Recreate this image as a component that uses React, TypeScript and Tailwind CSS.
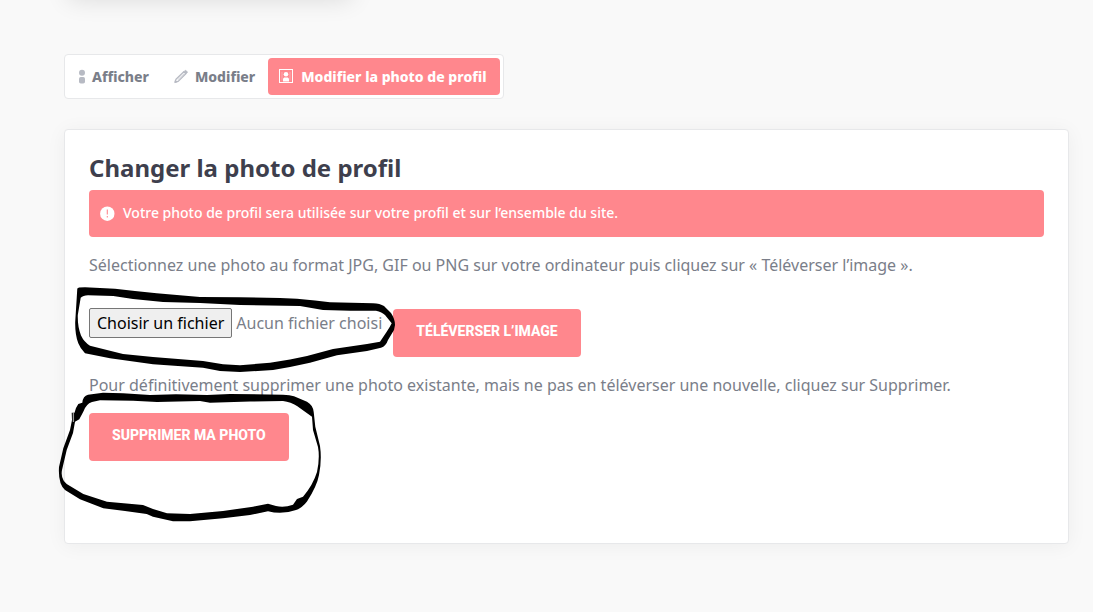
import type { ReactNode } from 'react';

function UserIcon() {
  return (
    <svg className="h-4 w-2" viewBox="0 0 8 16" fill="currentColor" aria-hidden="true">
      <circle cx="4" cy="3.8" r="3" />
      <rect x="1" y="8" width="6" height="6.6" rx="1.8" />
    </svg>
  );
}

function PencilIcon() {
  return (
    <svg className="h-4 w-4" viewBox="0 0 16 16" fill="none" stroke="currentColor" strokeLinejoin="round" aria-hidden="true">
      <path d="M2.2 13 3 10.2 10.8 2.8l2 2L5.2 12.4Z" strokeWidth="1.3" />
      <path d="M4.6 10.9 11 4.8" strokeWidth="0.7" />
      <path d="m11 2.4 2.3 2.3 1.1-1.2c.5-.6-1.8-2.7-2.4-2.1Z" fill="currentColor" strokeWidth="0.6" />
      <path d="m1.8 13.6.5-2 1.5 1.5Z" fill="currentColor" strokeWidth="0.8" />
    </svg>
  );
}

function PortraitIcon() {
  return (
    <svg className="h-4 w-4" viewBox="0 0 16 16" fill="currentColor" aria-hidden="true">
      <rect x="1.5" y="0.5" width="13" height="13" fill="none" stroke="currentColor" />
      <path d="M3.5 3h1v8.5h-1zM11.5 3h1v8.5h-1z" opacity="0.3" />
      <circle cx="8" cy="5.2" r="2.3" />
      <path d="M5 12.5v-2.2C5 9 6 8.4 6.8 8.4h2.4c.8 0 1.8.6 1.8 1.9v2.2Z" />
    </svg>
  );
}

function AlertIcon() {
  return (
    <svg className="mt-1 h-4 w-4 shrink-0" viewBox="0 0 16 16" aria-hidden="true">
      <circle cx="8.3" cy="8.7" r="7.2" fill="currentColor" />
      <path d="M8.3 4.6v5M8.3 11v1.5" stroke="#ff878d" strokeWidth="1.1" />
    </svg>
  );
}

interface TabProps {
  icon: ReactNode;
  label: string;
  active?: boolean;
  className: string;
}

function Tab({ icon, label, active = false, className }: TabProps) {
  return (
    <a
      href="#"
      aria-current={active ? 'page' : undefined}
      className={`flex h-[37px] items-center rounded text-sm font-extrabold whitespace-nowrap ${
        active ? 'bg-[#ff878d] text-white' : 'text-[#7a7e89]'
      } ${className}`}
    >
      <span className={active ? '' : 'text-[#b7bac3]'}>{icon}</span>
      {label}
    </a>
  );
}

function ActionButton({ children }: { children: ReactNode }) {
  return (
    <button
      type="button"
      className="h-12 rounded bg-[#ff878d] px-[23px] pb-1 font-[Roboto,sans-serif] text-sm font-extrabold whitespace-nowrap text-white uppercase hover:bg-[#f9747b]"
    >
      {children}
    </button>
  );
}

// Freehand marker loops around the two actions
function MarkerLoops() {
  return (
    <svg
      className="pointer-events-none absolute top-0 left-0 h-[540px] w-[400px]"
      viewBox="0 0 400 540"
      fill="#000"
      fillRule="evenodd"
      aria-hidden="true"
    >
      <path
        d="M77.3 288.5 79 287.5 85 287.3 115 288.7 135 291 156.7 293.3 200 297 240 297.3 280 298 297 298.7 315 300.5 330 302.3 373 303.3 Q380 303.6 384 306 L391 313 Q395 319 395 325 L394 330 388 340 Q386 346 381 347.8 L367 351 337 355.3 310 362.7 290 367 273 370 240 372 220 371 203 367.7 153 364.3 110 358.3 85 353.3 Q80 348 78.3 343.3 Q75 335 75.2 322 L76.7 298.3Z
           M80.7 297.7 Q83 295.3 88 295.2 L113.3 296 133 299 163 302 200 303 240 305 300 306 323 310 350 310.7 376 310.7 Q382 312 385 315 L391.7 323.3 Q390 327 386.7 331.7 L380 341.7 367 344 333 349 307 356 290 359.5 270 362.7 240 365.3 223 364.3 203 361 153 357 123 354 90 345.7 Q84 342 81 335.5 Q77.5 327 77.8 315Z"
      />
      <path
        d="M71.7 412.7 H74.5 L76 408 78.3 404 82.3 402.7 Q83 396 88 394.8 L103 392.7 123 393.3 150 395 176 394.3 207 395 230 394 283 394.7 Q290 395 294 396.3 L307 401.7 Q313 405 313.7 412 L315.3 426.7 320 446 Q322 460 319 475 Q317 486 307 501.5 Q302 508 296 510 Q282 515 268 511.3 L250 515 223 518.3 190 521.3 173 521.3 153 516.7 146.7 514 125 511 103.3 508.3 80 499.3 65 490 Q58 484 59 467 L63.3 448.3 70 430 72 420Z
           M75 421.7 79.3 419.3 83.3 411.7 Q86 404 92 402 L100 400.3 133 400.7 157 402 200 401 210 402.7 250 401.5 283 401 Q291 402 297 406 L312 416.7 313 430 318 447 Q320 458 317 472 Q313 485 303 496.7 L297 499 293 504.7 Q284 508 276 506 L268 503.7 253 506.7 223 511 190 514 167 513.3 153 509 143 505 107 501.7 83.3 494 70 486 Q60 481 62 470 L66.7 450 73 433Z"
      />
      <path d="M73.4 413v9" stroke="#999" strokeWidth="1.3" />
    </svg>
  );
}

export default function App() {
  return (
    <div className="relative min-h-screen overflow-x-hidden bg-[#f9f9f9] font-['Noto_Sans',sans-serif] text-[#7a7e89]">
      <header className="-mt-10 ml-[68px] h-10 w-[284px] rounded shadow-[0_0_24px_rgba(0,0,0,0.12)]" />

      <main className="pt-[54px] pr-6 pb-16 pl-16">
        <nav className="flex w-fit rounded border border-[#e7e8ea] bg-white p-[3px]">
          <Tab icon={<UserIcon />} label="Afficher" className="gap-1.5 px-2.5" />
          <Tab icon={<PencilIcon />} label="Modifier" className="gap-1.5 pr-[13px] pl-3.5" />
          <Tab icon={<PortraitIcon />} label="Modifier la photo de profil" active className="gap-[7px] pr-3.5 pl-2.5" />
        </nav>

        <section className="mt-[30px] rounded border border-[#e7e8ea] bg-white px-6 pt-5 pb-[82px] shadow-[0_2px_20px_rgba(0,0,0,0.05)]">
          <h1 className="mb-1 text-2xl leading-9 font-bold text-[#3e3f4d]">Changer la photo de profil</h1>

          <div role="status" className="flex rounded bg-[#ff878d] px-2.5 pt-[11px] pb-[13px] text-sm leading-[23px] font-medium text-white">
            <div className="flex gap-2">
              <AlertIcon />
              <p>Votre photo de profil sera utilisée sur votre profil et sur l’ensemble du site.</p>
            </div>
          </div>

          <form>
            <p className="mt-4 leading-6">
              Sélectionnez une photo au format JPG, GIF ou PNG sur votre ordinateur puis cliquez sur « Téléverser l’image ».
            </p>

            <div className="mt-[31px] flex items-start">
              <input id="photo" type="file" accept="image/*" className="sr-only" />
              <label htmlFor="photo" className="mr-[11px] flex items-center gap-1 whitespace-nowrap">
                <span className="flex h-[30px] items-center rounded-xs border border-[#767676] bg-[#efefef] px-[7px] text-black">
                  Choisir un fichier
                </span>
                Aucun fichier choisi
              </label>
              <div className="pt-px">
                <ActionButton>Téléverser l’image</ActionButton>
              </div>
            </div>

            <p className="mt-4 mb-4 leading-6">
              Pour définitivement supprimer une photo existante, mais ne pas en téléverser une nouvelle, cliquez sur Supprimer.
            </p>
            <ActionButton>Supprimer ma photo</ActionButton>
          </form>
        </section>
      </main>

      <MarkerLoops />
    </div>
  );
}
